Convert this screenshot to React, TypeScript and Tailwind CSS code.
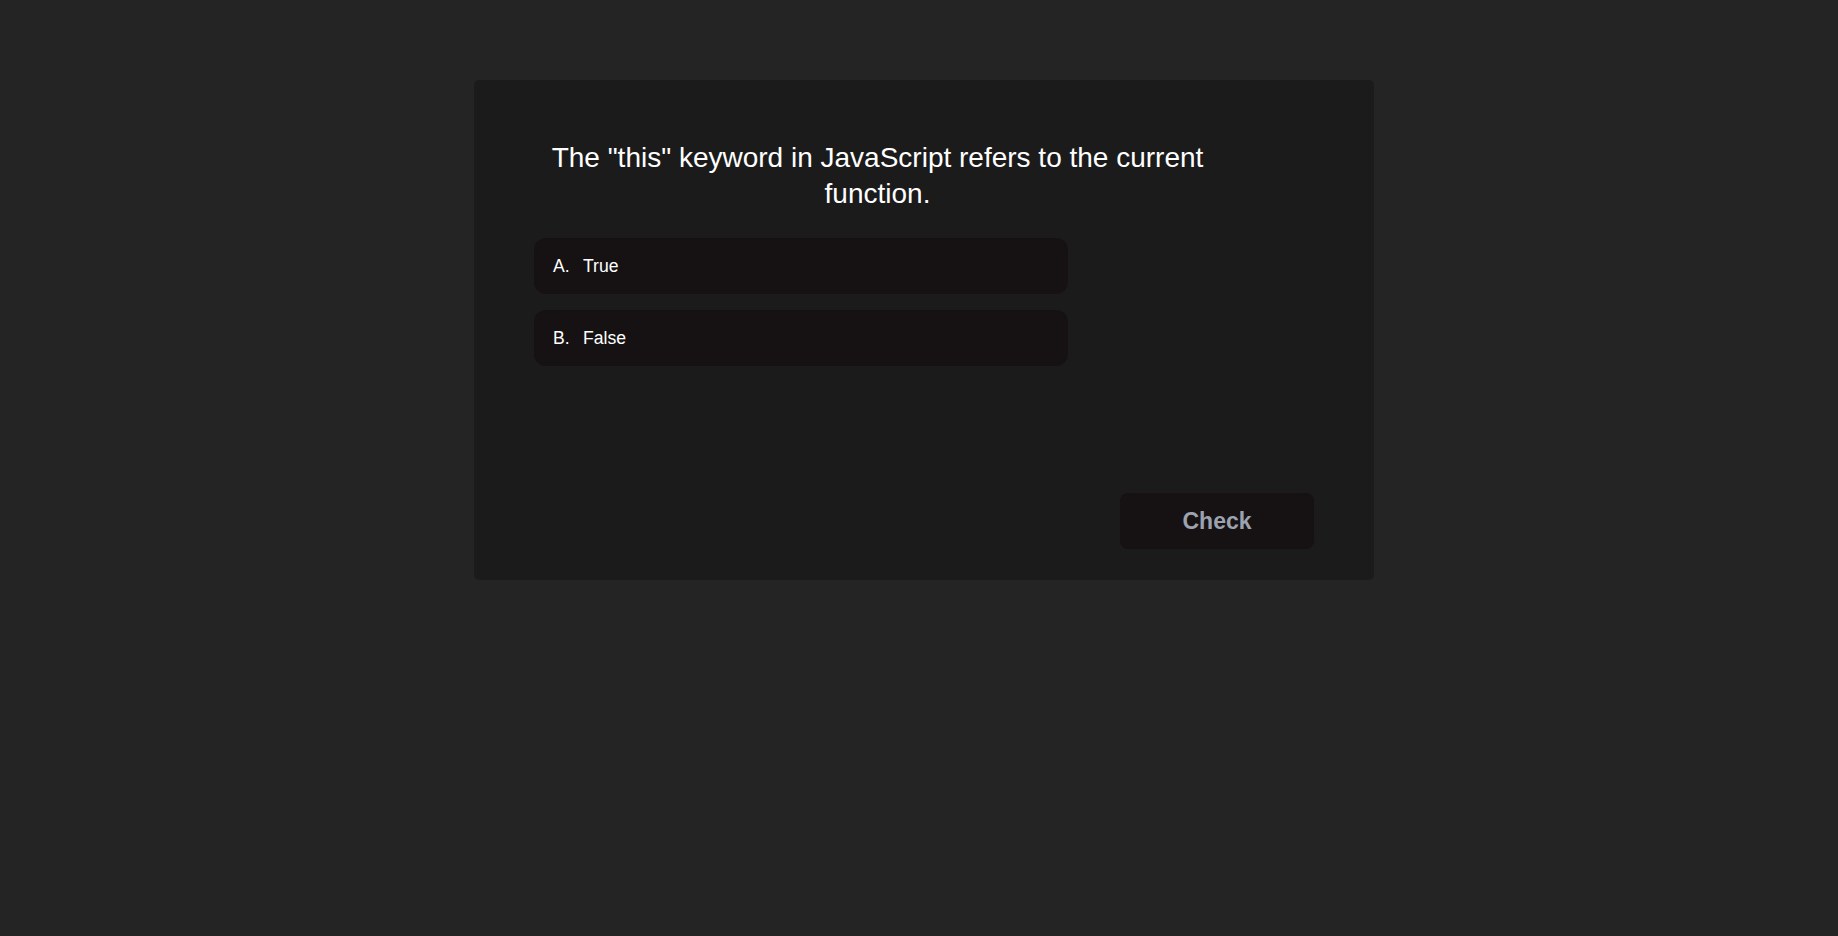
import React from "react";

export default function App() {
  const options = [
    { letter: "A.", text: "True" },
    { letter: "B.", text: "False" },
  ];
  return (
    <div
      className="min-h-screen w-full bg-[#242424] flex justify-center pl-[10px] pt-[80px]"
      style={{ fontFamily: '"Liberation Sans", Arial, sans-serif' }}
    >
      <div className="w-[900px] h-[500px] bg-[#1b1b1b] rounded-[5px] pt-[60px] px-[60px] flex flex-col">
        <h2 className="w-[687px] text-center text-[28px] leading-[36px] text-white font-normal">
          The "this" keyword in JavaScript refers to the current function.
        </h2>
        <div className="mt-[26px] w-[534px] flex flex-col gap-4">
          {options.map((o) => (
            <div
              key={o.letter}
              className="h-[56px] rounded-xl bg-[#161213] pl-[19px] flex items-center text-[17.6px] text-white"
            >
              <span className="w-[30px]">{o.letter}</span>
              <span>{o.text}</span>
            </div>
          ))}
        </div>
        <div className="mt-auto mb-[31px] flex justify-end">
          <button className="w-[194px] h-[56px] rounded-lg bg-[#161213] text-[#9ca3af] text-[23px] font-bold">
            Check
          </button>
        </div>
      </div>
    </div>
  );
}
